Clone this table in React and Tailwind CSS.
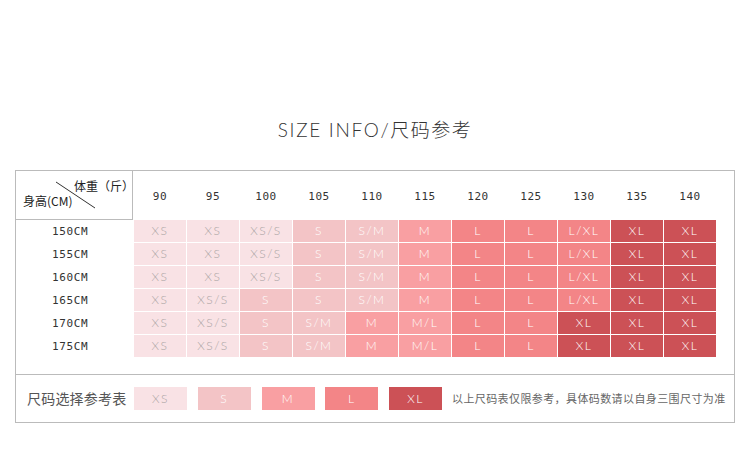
import React from 'react'

const weights = ['90', '95', '100', '105', '110', '115', '120', '125', '130', '135', '140']

const rows = [
  ['150CM', ['XS', 'XS', 'XS/S', 'S', 'S/M', 'M', 'L', 'L', 'L/XL', 'XL', 'XL']],
  ['155CM', ['XS', 'XS', 'XS/S', 'S', 'S/M', 'M', 'L', 'L', 'L/XL', 'XL', 'XL']],
  ['160CM', ['XS', 'XS', 'XS/S', 'S', 'S/M', 'M', 'L', 'L', 'L/XL', 'XL', 'XL']],
  ['165CM', ['XS', 'XS/S', 'S', 'S', 'S/M', 'M', 'L', 'L', 'L/XL', 'XL', 'XL']],
  ['170CM', ['XS', 'XS/S', 'S', 'S/M', 'M', 'M/L', 'L', 'L', 'XL', 'XL', 'XL']],
  ['175CM', ['XS', 'XS/S', 'S', 'S/M', 'M', 'M/L', 'L', 'L', 'XL', 'XL', 'XL']],
]

// tone of each size, full class names so tailwind picks them up
const tone = {
  XS: 'bg-[#f9e2e5] text-[#a9a2a3]',
  S: 'bg-[#f3c4c6] text-white',
  M: 'bg-[#f99fa2] text-white',
  L: 'bg-[#f38587] text-white',
  XL: 'bg-[#cc5156] text-white',
}

const toneOf = (v) => tone[v.split('/')[0]]

const Cell = ({ v }) => (
  <div
    className={`h-[22px] flex items-center justify-center text-[12px] font-light tracking-[1.5px] font-['Lato','Liberation_Sans',sans-serif] ${toneOf(v)}`}
  >
    {v}
  </div>
)

const App = () => {
  return (
    <div className='w-[750px] h-[450px] bg-white pt-[116px]'>
      {/* Title */}
      <div className="h-[26px] leading-[26px] text-center text-[19px] font-light text-[#333] tracking-[1.7px] font-['Lato','Noto_Sans_CJK_SC',sans-serif]">
        SIZE INFO/<span className="tracking-[1.5px] font-['Noto_Sans_CJK_SC',sans-serif]">尺码参考</span>
      </div>

      {/* Table box */}
      <div className='mt-[28px] ml-[15px] w-[720px] border border-[#bbbbbb]'>
        <div className='flex pb-[16px]'>
          {/* Height labels */}
          <div className='w-[117px] flex flex-col gap-[1px]'>
            <div className="relative h-[49px] border-r border-b border-[#bbbbbb] text-[12px] leading-[18px] text-[#222] font-['Noto_Sans_CJK_SC','Liberation_Sans',sans-serif]">
              <svg className='absolute left-0 top-0' width='116' height='48'>
                <line x1='40' y1='11' x2='79' y2='37' stroke='#333' strokeWidth='1' />
              </svg>
              <span className='absolute -right-[2px] top-[6px]'>体重（斤）</span>
              <span className='absolute left-[7px] top-[21px]'>身高(CM)</span>
            </div>
            {rows.map(([h]) => (
              <div key={h} className="h-[22px] flex items-center pl-[36px] text-[11px] text-[#333] tracking-[0.6px] font-['DejaVu_Sans_Mono',monospace]">
                {h}
              </div>
            ))}
          </div>

          {/* Grid of sizes */}
          <div className='ml-[1px] grid grid-cols-[repeat(11,52px)] gap-[1px] content-start'>
            {weights.map((w) => (
              <div key={w} className="h-[48px] pt-[5px] flex items-center justify-center text-[11px] text-[#333] tracking-[0.6px] font-['DejaVu_Sans_Mono',monospace]">
                {w}
              </div>
            ))}
            {rows.map(([h, vals]) =>
              vals.map((v, i) => <Cell key={h + i} v={v} />)
            )}
          </div>
        </div>

        {/* Legend */}
        <div className='h-[48px] border-t border-[#bbbbbb] flex items-center'>
          <div className="w-[117px] pl-[11px] text-[14px] text-[#555] tracking-[0.2px] font-['Noto_Sans_CJK_SC',sans-serif]">
            尺码选择参考表
          </div>
          <div className='ml-[1px] flex gap-[10.75px]'>
            {['XS', 'S', 'M', 'L', 'XL'].map((s) => (
              <div
                key={s}
                className={`w-[53px] h-[23px] flex items-center justify-center text-[12px] font-light tracking-[1.5px] font-['Lato','Liberation_Sans',sans-serif] ${toneOf(s)}`}
              >
                {s}
              </div>
            ))}
          </div>
          <div className="ml-[10px] text-[11px] text-[#666] tracking-[0.4px] font-['Noto_Sans_CJK_SC',sans-serif]">
            以上尺码表仅限参考，具体码数请以自身三围尺寸为准
          </div>
        </div>
      </div>
    </div>
  )
}

export default App
